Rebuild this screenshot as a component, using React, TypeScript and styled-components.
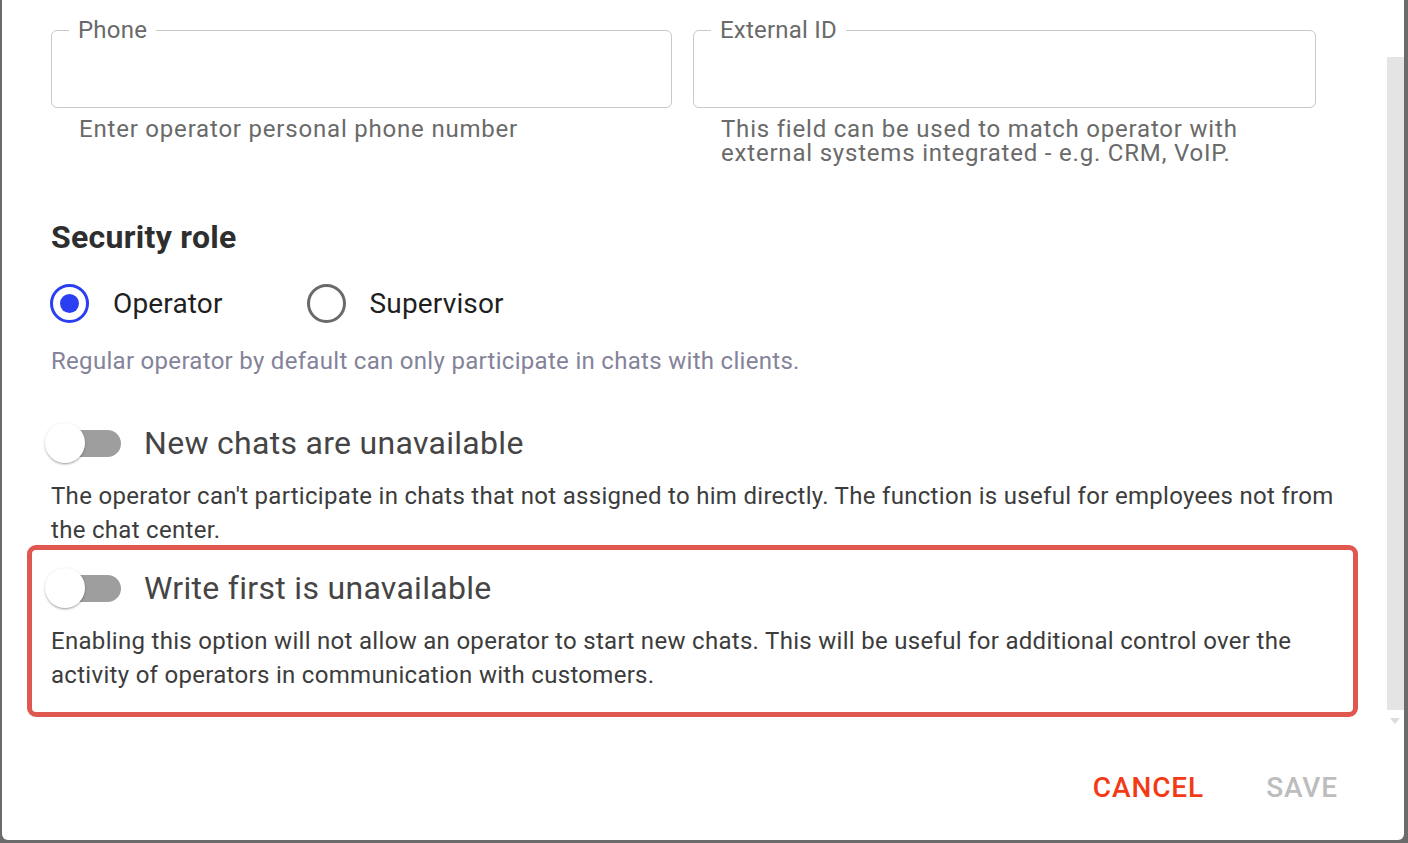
import React from "react";
import styled, { createGlobalStyle } from "styled-components";

const GlobalStyle = createGlobalStyle`
  html, body { margin: 0; padding: 0; }
  body {
    background: #6b6b6b;
    font-family: Roboto, "Liberation Sans", Arial, sans-serif;
    overflow: hidden;
  }
  * { box-sizing: border-box; }
`;

const Backdrop = styled.div`
  width: 1408px;
  height: 843px;
  padding: 0 4px 3px 2px;
  display: flex;
`;

const Dialog = styled.div`
  position: relative;
  flex: 1;
  background: #fff;
  border-radius: 0 0 6px 6px;
  display: flex;
  flex-direction: column;
`;

const Content = styled.div`
  padding: 20px 62px 0 49px;
  display: flex;
  flex-direction: column;
`;

const FieldsRow = styled.div`
  display: grid;
  grid-template-columns: 621px 623px;
  column-gap: 21px;
`;

const Field = styled.div`
  display: flex;
  flex-direction: column;
`;

const Outline = styled.fieldset`
  margin: 0;
  height: 88px;
  padding: 0 16px;
  border: 1.5px solid #c8c8c8;
  border-radius: 6px;
`;

const Legend = styled.legend`
  margin-left: 1px;
  padding: 0 9px;
  font-size: 24px;
  line-height: 20px;
  letter-spacing: 0.22px;
  color: #6a6a6a;
`;

const Helper = styled.div`
  margin-top: 9px;
  padding-left: 28px;
  font-size: 24px;
  line-height: 24px;
  letter-spacing: 0.8px;
  color: #6a6a6a;
`;

const Title = styled.h2`
  margin: 52px 0 0;
  font-size: 32px;
  line-height: 40px;
  font-weight: 700;
  letter-spacing: 0.3px;
  color: #2e2e2e;
`;

const RadioRow = styled.div`
  display: flex;
  align-items: center;
  margin-top: 25px;
  height: 42px;
`;

const RadioOption = styled.label`
  display: flex;
  align-items: center;
  gap: 24px;
  margin-right: 84px;
  font-size: 28px;
  letter-spacing: 0.15px;
  color: #1f1f1f;
  &:first-child {
    margin-left: -1px;
  }
`;

const RadioCircle = styled.span<{ $checked?: boolean }>`
  width: 39px;
  height: 39px;
  border-radius: 50%;
  border: 3.5px solid ${(p) => (p.$checked ? "#2b3ff2" : "#6a6a6a")};
  display: flex;
  align-items: center;
  justify-content: center;
  &::after {
    content: "";
    width: 19px;
    height: 19px;
    border-radius: 50%;
    background: ${(p) => (p.$checked ? "#2b3ff2" : "transparent")};
  }
`;

const RoleHint = styled.p`
  margin: 22px 0 0;
  font-size: 24px;
  line-height: 30px;
  letter-spacing: 0.3px;
  color: #84839a;
`;

const Option = styled.div`
  margin-top: 45px;
`;

const Highlight = styled.div`
  margin: -2px -16px 0 -24px;
  padding: 16px 0 20px 19px;
  border: 5px solid #e0574f;
  border-radius: 9px;
`;

const ToggleRow = styled.div`
  display: flex;
  align-items: center;
  height: 44px;
`;

const Switch = styled.span`
  position: relative;
  width: 76px;
  height: 40px;
  margin-left: -6px;
  margin-right: 23px;
  display: flex;
  align-items: center;
  flex-shrink: 0;
`;

const Track = styled.span`
  margin-left: 8px;
  width: 68px;
  height: 27px;
  border-radius: 14px;
  background: #9e9e9e;
`;

const Thumb = styled.span`
  position: absolute;
  left: 0;
  top: 0;
  width: 40px;
  height: 40px;
  border-radius: 50%;
  background: #fff;
  box-shadow: 0 2px 2px -1px rgba(0, 0, 0, 0.25), 0 1px 3px rgba(0, 0, 0, 0.2);
`;

const ToggleLabel = styled.span`
  font-size: 32px;
  letter-spacing: 0.3px;
  color: #454545;
`;

const Description = styled.p`
  margin: 14px 0 0;
  font-size: 24px;
  line-height: 34px;
  letter-spacing: 0.3px;
  color: #3c3c3c;
`;

const Actions = styled.div`
  flex: 1;
  display: flex;
  justify-content: flex-end;
  align-items: flex-start;
  gap: 62px;
  padding: 56px 66px 0 0;
`;

const ActionButton = styled.button<{ $disabled?: boolean }>`
  border: none;
  background: none;
  padding: 0;
  font-family: inherit;
  font-size: 28px;
  line-height: 30px;
  font-weight: 500;
  letter-spacing: 0.9px;
  text-transform: uppercase;
  color: ${(p) => (p.$disabled ? "#bdbdbd" : "#f23b16")};
  cursor: ${(p) => (p.$disabled ? "default" : "pointer")};
`;

const ScrollTrack = styled.div`
  position: absolute;
  right: 0;
  top: 57px;
  width: 17px;
  height: 653px;
  background: #e4e4e4;
`;

const ScrollArrow = styled.div`
  position: absolute;
  right: 4px;
  top: 718px;
  width: 0;
  height: 0;
  border-left: 5px solid transparent;
  border-right: 5px solid transparent;
  border-top: 6px solid #dcdcdc;
`;

function Toggle() {
  return (
    <Switch>
      <Track />
      <Thumb />
    </Switch>
  );
}

export default function App() {
  return (
    <>
      <GlobalStyle />
      <Backdrop>
        <Dialog>
          <Content>
            <FieldsRow>
              <Field>
                <Outline>
                  <Legend>Phone</Legend>
                </Outline>
                <Helper>Enter operator personal phone number</Helper>
              </Field>
              <Field>
                <Outline>
                  <Legend>External ID</Legend>
                </Outline>
                <Helper>
                  This field can be used to match operator with
                  <br />
                  external systems integrated - e.g. CRM, VoIP.
                </Helper>
              </Field>
            </FieldsRow>

            <Title>Security role</Title>
            <RadioRow>
              <RadioOption>
                <RadioCircle $checked />
                Operator
              </RadioOption>
              <RadioOption>
                <RadioCircle />
                Supervisor
              </RadioOption>
            </RadioRow>
            <RoleHint>
              Regular operator by default can only participate in chats with clients.
            </RoleHint>

            <Option>
              <ToggleRow>
                <Toggle />
                <ToggleLabel>New chats are unavailable</ToggleLabel>
              </ToggleRow>
              <Description>
                The operator can't participate in chats that not assigned to him directly. The
                function is useful for employees not from the chat center.
              </Description>
            </Option>

            <Highlight>
              <ToggleRow>
                <Toggle />
                <ToggleLabel>Write first is unavailable</ToggleLabel>
              </ToggleRow>
              <Description>
                Enabling this option will not allow an operator to start new chats. This will be
                useful for additional control over the activity of operators in communication
                with customers.
              </Description>
            </Highlight>
          </Content>
          <Actions>
            <ActionButton>Cancel</ActionButton>
            <ActionButton $disabled>Save</ActionButton>
          </Actions>
          <ScrollTrack />
          <ScrollArrow />
        </Dialog>
      </Backdrop>
    </>
  );
}
